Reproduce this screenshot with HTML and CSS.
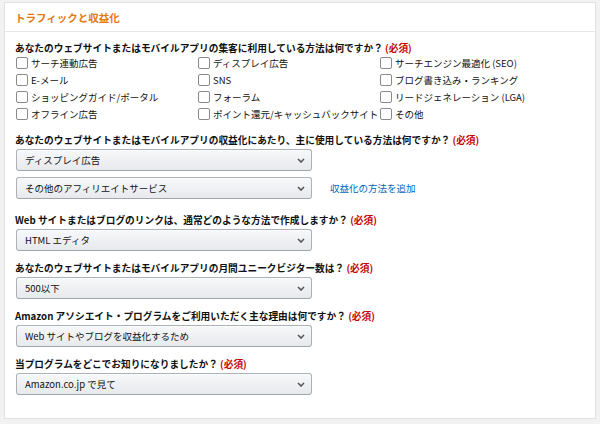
FILE: index.html
```html
<!DOCTYPE html>
<html lang="ja">
<head>
<meta charset="utf-8">
<link rel="stylesheet" href="styles.css">
</head>
<body>
<div class="panel">
  <div class="panel-head"><h2 class="title">トラフィックと収益化</h2></div>
  <div class="panel-body">
    <div class="field">
      <div class="label">あなたのウェブサイトまたはモバイルアプリの集客に利用している方法は何ですか？ <span class="req">(必須)</span></div>
      <div class="checks">
        <label class="check"><span class="box"></span>サーチ連動広告</label>
        <label class="check"><span class="box"></span>ディスプレイ広告</label>
        <label class="check"><span class="box"></span>サーチエンジン最適化 (SEO)</label>
        <label class="check"><span class="box"></span>E-メール</label>
        <label class="check"><span class="box"></span>SNS</label>
        <label class="check"><span class="box"></span>ブログ書き込み・ランキング</label>
        <label class="check"><span class="box"></span>ショッピングガイド/ポータル</label>
        <label class="check"><span class="box"></span>フォーラム</label>
        <label class="check"><span class="box"></span>リードジェネレーション (LGA)</label>
        <label class="check"><span class="box"></span>オフライン広告</label>
        <label class="check"><span class="box"></span>ポイント還元/キャッシュバックサイト</label>
        <label class="check tight"><span class="box"></span>その他</label>
      </div>
    </div>

    <div class="field">
      <div class="label">あなたのウェブサイトまたはモバイルアプリの収益化にあたり、主に使用している方法は何ですか？ <span class="req">(必須)</span></div>
      <div class="select"><span>ディスプレイ広告</span><svg class="chev" viewBox="0 0 8 5" width="8" height="5"><path d="M1 1 L4 4 L7 1" fill="none" stroke="#555" stroke-width="1.6"/></svg></div>
      <div class="select-row">
        <div class="select"><span>その他のアフィリエイトサービス</span><svg class="chev" viewBox="0 0 8 5" width="8" height="5"><path d="M1 1 L4 4 L7 1" fill="none" stroke="#555" stroke-width="1.6"/></svg></div>
        <a class="link" href="#">収益化の方法を追加</a>
      </div>
    </div>

    <div class="field">
      <div class="label">Web サイトまたはブログのリンクは、通常どのような方法で作成しますか？ <span class="req">(必須)</span></div>
      <div class="select"><span>HTML エディタ</span><svg class="chev" viewBox="0 0 8 5" width="8" height="5"><path d="M1 1 L4 4 L7 1" fill="none" stroke="#555" stroke-width="1.6"/></svg></div>
    </div>

    <div class="field">
      <div class="label">あなたのウェブサイトまたはモバイルアプリの月間ユニークビジター数は？ <span class="req">(必須)</span></div>
      <div class="select"><span>500以下</span><svg class="chev" viewBox="0 0 8 5" width="8" height="5"><path d="M1 1 L4 4 L7 1" fill="none" stroke="#555" stroke-width="1.6"/></svg></div>
    </div>

    <div class="field">
      <div class="label">Amazon アソシエイト・プログラムをご利用いただく主な理由は何ですか？ <span class="req">(必須)</span></div>
      <div class="select"><span>Web サイトやブログを収益化するため</span><svg class="chev" viewBox="0 0 8 5" width="8" height="5"><path d="M1 1 L4 4 L7 1" fill="none" stroke="#555" stroke-width="1.6"/></svg></div>
    </div>

    <div class="field">
      <div class="label">当プログラムをどこでお知りになりましたか？ <span class="req">(必須)</span></div>
      <div class="select"><span>Amazon.co.jp で見て</span><svg class="chev" viewBox="0 0 8 5" width="8" height="5"><path d="M1 1 L4 4 L7 1" fill="none" stroke="#555" stroke-width="1.6"/></svg></div>
    </div>
  </div>
</div>
</body>
</html>
```

FILE: styles.css
```css
html, body {
  margin: 0;
  padding: 0;
}
body {
  background: #f2f2f2;
  padding: 2px 4px 5px 4px;
  font-family: "Noto Sans CJK JP", "Noto Sans", sans-serif;
  color: #111;
  font-size: 9.5px;
}
.panel {
  background: #fff;
  border: 1px solid #e0e0e0;
  height: 417px;
  box-sizing: border-box;
}
.panel-head {
  height: 28px;
  border-bottom: 1px solid #e6e6e6;
  display: flex;
  align-items: center;
  padding: 0 10px;
}
.title {
  margin: 0;
  font-size: 10.5px;
  font-weight: bold;
  color: #e47911;
}
.panel-body {
  padding: 9px 10px 0 10px;
  display: flex;
  flex-direction: column;
  gap: 10px;
}
.field {
  display: flex;
  flex-direction: column;
}
.label {
  font-weight: bold;
  font-size: 9.7px;
  line-height: 14px;
  margin-bottom: 2px;
  white-space: nowrap;
}
.req {
  color: #c40000;
}
.checks {
  display: flex;
  flex-wrap: wrap;
  width: 570px;
  padding-left: 1px;
  margin-top: -2px;
  margin-bottom: 1px;
}
.check {
  min-width: 182px;
  height: 16.8px;
  display: flex;
  align-items: center;
  gap: 3px;
  white-space: nowrap;
  font-size: 9.5px;
}
.check.tight {
  min-width: 0;
}
.box {
  width: 12px;
  height: 12px;
  box-sizing: border-box;
  border: 1px solid #888c8c;
  border-radius: 2px;
  background: #fff;
  flex: none;
}
.select {
  width: 296px;
  height: 22px;
  box-sizing: border-box;
  margin-left: 1px;
  border: 1px solid #adb1b8;
  border-bottom-color: #a2a6ac;
  border-radius: 3px;
  background: linear-gradient(#f7f8fa, #e7e9ec);
  box-shadow: inset 0 1px 0 rgba(255,255,255,0.6);
  display: flex;
  align-items: center;
  justify-content: space-between;
  padding: 0 6px 0 8px;
  font-size: 9.5px;
  color: #111;
}
.chev {
  display: block;
}
.select-row {
  display: flex;
  align-items: center;
  margin-top: 6px;
  margin-bottom: 4px;
  gap: 18px;
}
.link {
  color: #0066c0;
  text-decoration: none;
  font-size: 9.5px;
}
```
